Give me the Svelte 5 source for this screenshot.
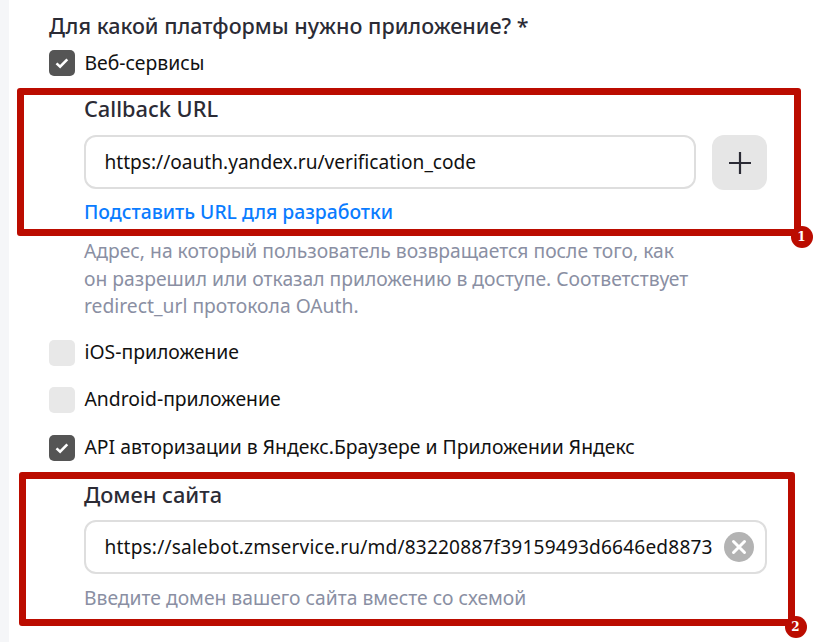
<script>
  const check = 'M7.5 13.4l3.6 3.2 7.2-7.2';
</script>

<div class="page">
  <main class="form">
    <h2 class="title">Для какой платформы нужно приложение? *</h2>

    <label class="opt first">
      <span class="box on"><svg viewBox="0 0 26 26" width="26" height="26"><path d={check} /></svg></span>
      <span class="txt">Веб-сервисы</span>
    </label>

    <section class="sub callback">
      <h3>Callback URL</h3>
      <div class="row">
        <div class="input grow"><span class="val">https://oauth.yandex.ru/verification_code</span></div>
        <button class="add" aria-label="Добавить">
          <svg viewBox="0 0 24 24" width="24" height="24"><path d="M12 1v22M1 12h22" /></svg>
        </button>
      </div>
      <a class="link" href="#top">Подставить URL для разработки</a>
      <p class="hint wide">Адрес, на который пользователь возвращается после того, как он разрешил или отказал приложению в доступе. Соответствует redirect_url протокола OAuth.</p>
    </section>

    <label class="opt ios"><span class="box"></span><span class="txt">iOS-приложение</span></label>
    <label class="opt android"><span class="box"></span><span class="txt">Android-приложение</span></label>
    <label class="opt api">
      <span class="box on"><svg viewBox="0 0 26 26" width="26" height="26"><path d={check} /></svg></span>
      <span class="txt">API авторизации в Яндекс.Браузере и Приложении Яндекс</span>
    </label>

    <section class="sub domain">
      <h3>Домен сайта</h3>
      <div class="input full">
        <span class="val clip">https://salebot.zmservice.ru/md/83220887f39159493d6646ed88733</span>
        <span class="clear">
          <svg viewBox="0 0 30 30" width="30" height="30"><circle cx="15" cy="15" r="15" /><path d="M9.5 9.5l11 11M20.5 9.5l-11 11" /></svg>
        </span>
      </div>
      <p class="hint">Введите домен вашего сайта вместе со схемой</p>
    </section>
  </main>

  <div class="mark m1"><span class="badge">1</span></div>
  <div class="mark m2"><span class="badge">2</span></div>
</div>

<style>
  :global(body) {
    margin: 0;
    background: #fff;
  }
  .page {
    position: relative;
    width: 827px;
    height: 642px;
    overflow: hidden;
    box-sizing: border-box;
    border-left: 9px solid #f5f6f8;
    font-family: "Noto Sans", "Open Sans", sans-serif;
    color: #21212b;
  }
  .form {
    padding: 11px 0 0 40px;
    width: 718px;
  }
  .title {
    margin: 0;
    font-size: 21.5px;
    line-height: 30px;
    font-weight: 500;
    color: #2b2b35;
  }
  .opt {
    display: flex;
    align-items: center;
    gap: 9.5px;
    height: 26px;
    font-size: 19.35px;
    color: #111;
  }
  .txt { padding-bottom: 2px; }
  .first { margin-top: 9px; }
  .ios { margin-top: 20px; }
  .android { margin-top: 21px; }
  .api { margin-top: 22px; }
  .box {
    flex: none;
    width: 26px;
    height: 26px;
    border-radius: 5px;
    background: #e8e8e8;
  }
  .box.on { background: #555; }
  .box svg { display: block; fill: none; stroke: #fff; stroke-width: 2.6; }
  .sub { padding-left: 35px; }
  .callback { margin-top: 18px; }
  .domain { margin-top: 19px; }
  h3 {
    margin: 0;
    font-size: 21.8px;
    line-height: 30px;
    font-weight: 500;
    color: #2b2b35;
  }
  .row {
    display: flex;
    align-items: flex-start;
    gap: 16px;
    margin-top: 11px;
  }
  .input {
    display: flex;
    align-items: center;
    box-sizing: border-box;
    height: 54px;
    padding-left: 18.5px;
    border: 2px solid #dedede;
    border-radius: 12px;
    font-size: 19.1px;
    color: #111;
    background: #fff;
  }
  .grow { flex: none; width: 612px; }
  .full { width: 683px; margin-top: 10px; }
  .val { white-space: nowrap; }
  .clip { overflow: hidden; width: 608px; flex: none; letter-spacing: 0.18px; }
  .clear { margin-left: 11px; display: flex; }
  .clear circle { fill: #b3b3b3; }
  .clear path { stroke: #fff; stroke-width: 3; fill: none; stroke-linecap: round; }
  .add {
    flex: none;
    width: 55px;
    height: 55px;
    padding: 0;
    display: flex;
    align-items: center;
    justify-content: center;
    border: 0;
    border-radius: 12px;
    background: #e6e6e6;
  }
  .add path { stroke: #2b2b35; stroke-width: 2.2; fill: none; }
  .link {
    display: block;
    margin-top: 9px;
    font-size: 19.35px;
    line-height: 26px;
    font-weight: 500;
    color: #0a7cff;
    text-decoration: none;
  }
  .hint {
    margin: 12px 0 0;
    font-size: 19.3px;
    line-height: 27.5px;
    color: #8a8fa3;
  }
  .hint.wide { width: 610px; }
  .domain .hint { margin-top: 10px; }
  .mark {
    position: absolute;
    box-sizing: border-box;
    border: 7.5px solid #bb0c00;
    border-radius: 3px;
    pointer-events: none;
  }
  .m1 { left: 8px; top: 88px; width: 784px; height: 148px; }
  .m2 { left: 10px; top: 472px; width: 776px; height: 154px; }
  .badge {
    position: absolute;
    right: -18.5px;
    bottom: -18.5px;
    width: 22px;
    height: 22px;
    border-radius: 50%;
    background: #bb0c00;
    color: #fff;
    font-family: "DejaVu Serif", serif;
    font-size: 12px;
    font-weight: 700;
    line-height: 22px;
    text-align: center;
  }
</style>
